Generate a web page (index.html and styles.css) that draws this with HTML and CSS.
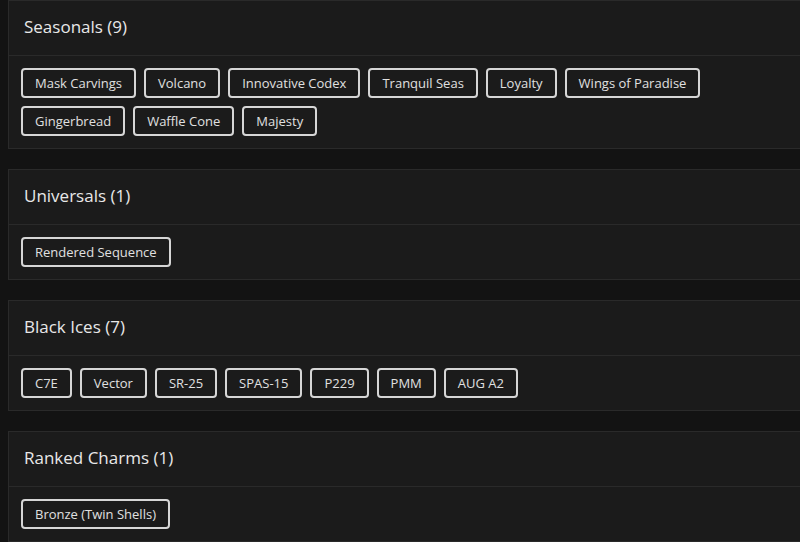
FILE: index.html
```html
<!DOCTYPE html>
<html>
<head>
<meta charset="utf-8">
<link rel="stylesheet" href="styles.css">
</head>
<body>
<div class="list">
  <section class="card">
    <div class="card-head">Seasonals (9)</div>
    <div class="card-body">
      <span class="tag">Mask Carvings</span>
      <span class="tag">Volcano</span>
      <span class="tag">Innovative Codex</span>
      <span class="tag">Tranquil Seas</span>
      <span class="tag">Loyalty</span>
      <span class="tag">Wings of Paradise</span>
      <span class="tag">Gingerbread</span>
      <span class="tag">Waffle Cone</span>
      <span class="tag">Majesty</span>
    </div>
  </section>
  <section class="card">
    <div class="card-head">Universals (1)</div>
    <div class="card-body">
      <span class="tag">Rendered Sequence</span>
    </div>
  </section>
  <section class="card">
    <div class="card-head">Black Ices (7)</div>
    <div class="card-body">
      <span class="tag">C7E</span>
      <span class="tag">Vector</span>
      <span class="tag">SR-25</span>
      <span class="tag">SPAS-15</span>
      <span class="tag">P229</span>
      <span class="tag">PMM</span>
      <span class="tag">AUG A2</span>
    </div>
  </section>
  <section class="card">
    <div class="card-head">Ranked Charms (1)</div>
    <div class="card-body">
      <span class="tag">Bronze (Twin Shells)</span>
    </div>
  </section>
</div>
</body>
</html>
```
FILE: styles.css
```css
html, body {
  margin: 0;
  padding: 0;
  background: #131313;
  overflow: hidden;
  font-family: "Open Sans", "Noto Sans", sans-serif;
  color: #e4e4e4;
}
.list {
  width: 830px;
  padding-left: 8px;
  display: flex;
  flex-direction: column;
  gap: 20px;
}
.card {
  background: #1b1b1b;
  border: 1px solid #2a2a2a;
}
.card-head {
  box-sizing: border-box;
  height: 55px;
  display: flex;
  align-items: center;
  padding: 0 0 3px 15px;
  font-size: 17px;
  font-weight: 500;
  color: #e8e8e8;
  border-bottom: 1px solid #2a2a2a;
}
.card-body {
  padding: 12px 12px;
  display: flex;
  flex-wrap: wrap;
  gap: 8px 8px;
  max-width: 700px;
}
.tag {
  box-sizing: border-box;
  height: 30px;
  display: inline-flex;
  align-items: center;
  padding: 0 12px;
  border: 2px solid #d6d6d6;
  border-radius: 4px;
  font-size: 13px;
  color: #e0e0e0;
}
```
